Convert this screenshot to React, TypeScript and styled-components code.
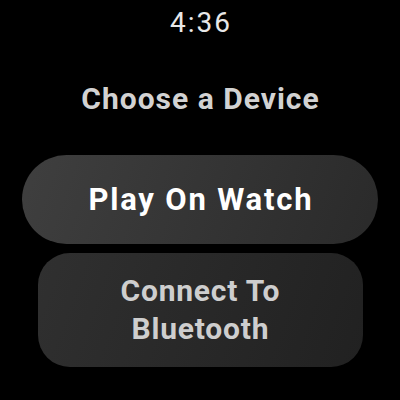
import React from "react";
import styled, { createGlobalStyle } from "styled-components";

const Global = createGlobalStyle`
  html, body { margin: 0; padding: 0; background: #000; }
  body { font-family: Roboto, "Noto Sans", sans-serif; }
`;

const Screen = styled.div`
  width: 400px;
  height: 400px;
  background: #000;
  display: flex;
  flex-direction: column;
  align-items: center;
  overflow: hidden;
`;

const Time = styled.div`
  margin-top: 8px;
  padding-left: 2px;
  font-size: 28px;
  line-height: 30px;
  font-weight: 400;
  color: #e8e8e8;
  letter-spacing: 2px;
`;

const Title = styled.div`
  margin-top: 44px;
  padding-left: 1px;
  font-size: 30px;
  line-height: 34px;
  font-weight: 700;
  color: #d2d2d2;
  letter-spacing: 1px;
`;

const Chip = styled.button<{
  $w: number;
  $h: number;
  $r: number;
  $from: string;
  $to: string;
  $color: string;
  $size: number;
  $ls: number;
}>`
  width: ${(p) => p.$w}px;
  height: ${(p) => p.$h}px;
  border-radius: ${(p) => p.$r}px;
  border: none;
  padding: 0 24px 0 ${(p) => 24 + p.$ls}px;
  background: linear-gradient(110deg, ${(p) => p.$from}, ${(p) => p.$to});
  color: ${(p) => p.$color};
  font-family: Roboto, "Noto Sans", sans-serif;
  font-size: ${(p) => p.$size}px;
  line-height: 38px;
  font-weight: 700;
  letter-spacing: ${(p) => p.$ls}px;
  text-align: center;
  display: flex;
  align-items: center;
  justify-content: center;
`;

const Buttons = styled.div`
  margin-top: 39px;
  display: flex;
  flex-direction: column;
  align-items: center;
  gap: 9px;
`;

export default function App() {
  return (
    <>
      <Global />
      <Screen>
        <Time>4:36</Time>
        <Title>Choose a Device</Title>
        <Buttons>
          <Chip $w={356} $h={89} $r={45} $from="#3f3f3f" $to="#2a2a2a" $color="#ffffff" $size={31} $ls={1.8}>
            Play On Watch
          </Chip>
          <Chip $w={325} $h={114} $r={32} $from="#303030" $to="#212121" $color="#cecece" $size={30} $ls={0.8}>
            Connect To
            <br />
            Bluetooth
          </Chip>
        </Buttons>
      </Screen>
    </>
  );
}
